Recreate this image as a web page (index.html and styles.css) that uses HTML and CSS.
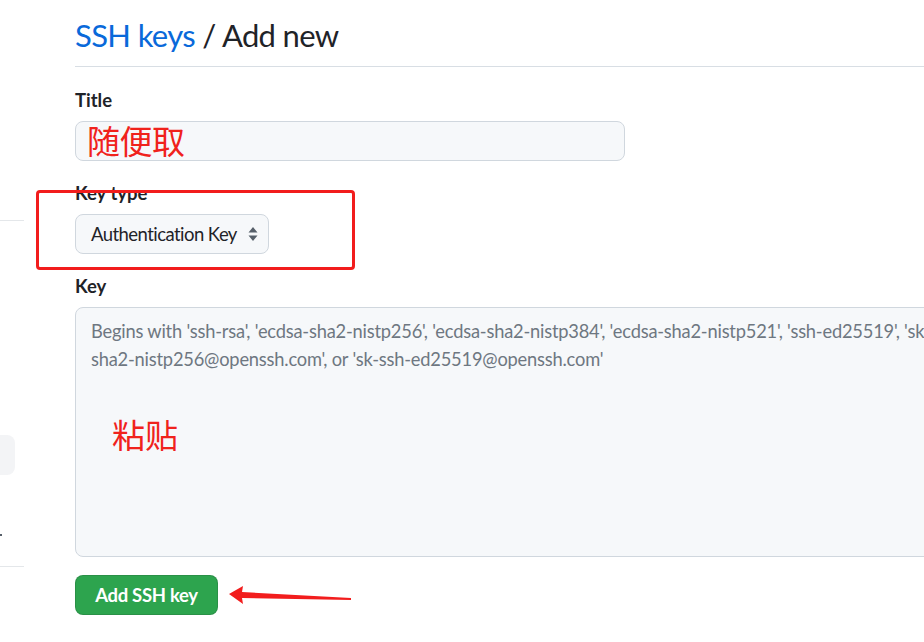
FILE: index.html
```html
<!DOCTYPE html>
<html lang="en">
<head>
<meta charset="utf-8">
<title>SSH keys / Add new</title>
<link rel="stylesheet" href="styles.css">
</head>
<body>
<div class="page">
  <aside class="sidebar">
    <div class="side-rule side-rule-top"></div>
    <div class="side-item"></div>
    <div class="side-dot"></div>
    <div class="side-rule side-rule-bottom"></div>
  </aside>
  <main class="main">
    <div class="subhead">
      <h2 class="subhead-heading"><a class="crumb" href="#">SSH keys</a> / Add new</h2>
    </div>
    <form class="form">
      <div class="form-group">
        <label class="label">Title</label>
        <div class="input title-input">
          <span class="note note-title">随便取</span>
        </div>
      </div>
      <div class="form-group keytype-group">
        <label class="label">Key type</label>
        <div class="select">
          <span>Authentication Key</span>
          <svg class="caret" width="10" height="16" viewBox="0 0 10 16"><path d="M5 1 L9.5 6.5 H0.5 Z M5 15 L9.5 9.5 H0.5 Z" fill="#57606a"/></svg>
        </div>
        <div class="highlight-box"></div>
      </div>
      <div class="form-group">
        <label class="label">Key</label>
        <div class="textarea">
          <p class="placeholder">Begins with 'ssh-rsa', 'ecdsa-sha2-nistp256', 'ecdsa-sha2-nistp384', 'ecdsa-sha2-nistp521', 'ssh-ed25519', 'sk-ecdsa-sha2-nistp256@openssh.com', or 'sk-ssh-ed25519@openssh.com'</p>
          <span class="note note-key">粘贴</span>
        </div>
      </div>
      <div class="actions">
        <button type="button" class="btn-primary">Add SSH key</button>
        <svg class="arrow" width="130" height="24" viewBox="0 0 130 24"><polygon points="0,9 14,1 13,7 122,13 122,15 13,13 14,19" fill="#f21d1d"/></svg>
      </div>
    </form>
  </main>
</div>
</body>
</html>
```
FILE: styles.css
```css
* { box-sizing: border-box; }
html, body { margin: 0; padding: 0; background: #ffffff; overflow: hidden; }
body {
  font-family: "Segoe UI", Lato, "Noto Sans", "Noto Sans CJK SC", sans-serif;
  color: #1f2328;
  width: 924px;
  height: 642px;
}
.page { display: flex; gap: 51px; width: 1200px; }
.sidebar { width: 24px; flex: none; display: flex; flex-direction: column; }
.side-rule { height: 1px; background: #e4e7ea; width: 24px; }
.side-rule-top { margin-top: 220px; }
.side-item { margin-top: 214px; width: 15px; height: 40px; background: #f3f4f6; border-radius: 0 8px 8px 0; }
.side-dot { margin-top: 59px; width: 2px; height: 2px; background: #57606a; }
.side-rule-bottom { margin-top: 30px; }

.main { flex: 1; padding-top: 11px; }
.subhead { border-bottom: 1px solid #d8dee4; padding-bottom: 7px; }
.subhead-heading { margin: 0; font-size: 31px; font-weight: 400; line-height: 48px; letter-spacing: -0.65px; color: #1f2328; }
.crumb { color: #0969da; text-decoration: none; }

.form { padding-top: 19px; }
.form-group { position: relative; margin-bottom: 18px; }
.label { display: block; font-size: 18.5px; font-weight: 700; line-height: 28px; margin-bottom: 7px; }
.input {
  position: relative;
  width: 550px; height: 40px;
  background: #f6f8fa; border: 1px solid #d0d7de; border-radius: 8px;
}
.note {
  position: absolute;
  color: #f0221c;
  font-family: "Microsoft YaHei", "Noto Sans CJK SC", sans-serif;
  font-size: 33px; line-height: 40px;
}
.note-title { left: 11px; top: -2px; letter-spacing: -0.5px; }
.select {
  display: inline-flex; align-items: center; gap: 11px;
  height: 40px; padding: 0 10px 0 15px;
  background: #f6f8fa; border: 1px solid #d0d7de; border-radius: 8px;
  font-size: 18.5px; letter-spacing: -0.55px; color: #1f2328;
}
.caret { display: block; }
.highlight-box {
  position: absolute; left: -39px; top: 11px;
  width: 319px; height: 80px;
  border: 3px solid #f21d1d; border-radius: 4px;
}
.textarea {
  position: relative;
  width: 947px; height: 250px;
  background: #f6f8fa; border: 1px solid #d0d7de; border-radius: 8px;
  padding: 9px 15px;
}
.placeholder { margin: 0; font-size: 18.3px; line-height: 28px; letter-spacing: -0.2px; color: #6e7781; }
.note-key { left: 36px; top: 106px; }
.actions { display: flex; align-items: center; gap: 11px; }
.btn-primary {
  height: 40px; width: 143px;
  background: #2da44e; color: #ffffff;
  border: 1px solid rgba(27,31,36,0.15); border-radius: 8px;
  font-family: inherit; font-size: 18.5px; font-weight: 700; letter-spacing: -0.3px;
  padding: 0;
}
.arrow { display: block; margin-top: 3px; }
```
